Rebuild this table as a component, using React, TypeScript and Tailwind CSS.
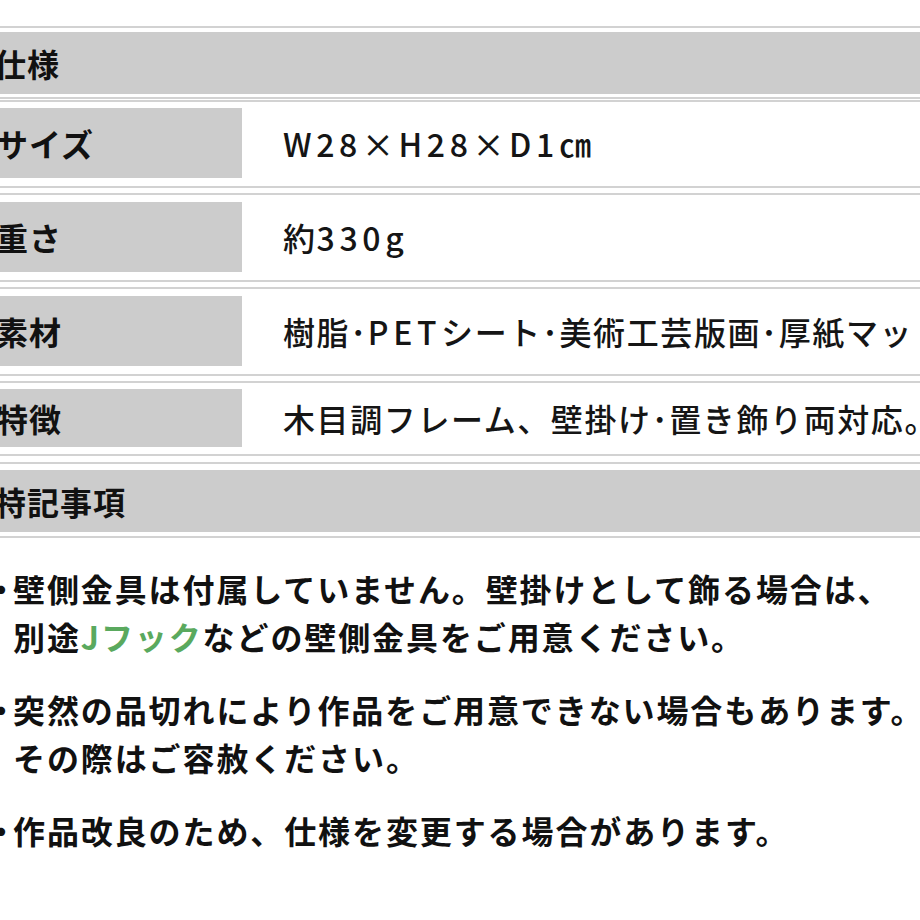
import React from "react";

const font = { fontFamily: '"Noto Sans CJK JP", "Noto Sans", sans-serif' };

function Header({ title, cls }: { title: string; cls: string }) {
  return (
    <div className={`border-y-2 border-[#d2d2d2] ${cls}`}>
      <div className="h-[62px] bg-[#cccccc] flex items-center">
        <span className="-ml-[6px] text-[32px] font-bold text-[#111] leading-none tracking-[1px]">{title}</span>
      </div>
    </div>
  );
}

function Row({ label, value, cls, h }: { label: string; value: React.ReactNode; cls: string; h: string }) {
  return (
    <div className={`border-y-2 border-[#d2d2d2] ${cls}`}>
      <div className={`flex ${h}`}>
        <div className="w-[242px] shrink-0 bg-[#cccccc] flex items-center">
          <span className="-ml-[4px] text-[32px] font-bold text-[#111] leading-none tracking-[1px]">{label}</span>
        </div>
        <div className="flex-1 flex items-center pl-[41px] overflow-hidden">
          <span className="text-[32px] font-medium text-[#151515] leading-none tracking-[1.6px] whitespace-nowrap">{value}</span>
        </div>
      </div>
    </div>
  );
}

function L({ children }: { children: React.ReactNode }) {
  return <span className="tracking-[4.6px]">{children}</span>;
}

function Note({ children, cls }: { children: React.ReactNode; cls: string }) {
  return (
    <div className={`flex -ml-[15px] ${cls}`}>
      <span className="w-[28px] shrink-0 text-[32px] font-bold leading-[48px] text-[#111]">・</span>
      <div className="text-[32px] font-bold leading-[48px] text-[#111] tracking-[1.9px]">{children}</div>
    </div>
  );
}

export default function App() {
  return (
    <div className="w-[920px] h-[920px] overflow-hidden bg-white" style={font}>
      <div className="pt-[26px] flex flex-col">
        <Header title="仕様" cls="pt-[4px] pb-[3px]" />
        <Row
          label="サイズ"
          value={<L>W28×H28×D1㎝</L>}
          cls="mt-[1px] pt-[6px] pb-[8px]"
          h="h-[70px]"
        />
        <Row
          label="重さ"
          value={
            <>
              約<L>330g</L>
            </>
          }
          cls="mt-[5px] pt-[7px] pb-[8px]"
          h="h-[70px]"
        />
        <Row
          label="素材"
          value={
            <>
              樹脂･<L>PET</L>シート･美術工芸版画･厚紙マット
            </>
          }
          cls="mt-[5px] pt-[7px] pb-[8px]"
          h="h-[70px]"
        />
        <Row
          label="特徴"
          value="木目調フレーム、壁掛け･置き飾り両対応。"
          cls="mt-[5px] pt-[6px] pb-[7px]"
          h="h-[58px]"
        />
        <Header title="特記事項" cls="mt-[6px] pt-[6px] pb-[4px]" />
        <div className="mt-[26px] flex flex-col">
          <Note cls="">
            <div className="whitespace-nowrap">壁側金具は付属していません。壁掛けとして飾る場合は、</div>
            <div className="whitespace-nowrap">
              別途<span className="text-[#5aa95e]">Jフック</span>などの壁側金具をご用意ください。
            </div>
          </Note>
          <Note cls="mt-[25px]">
            <div className="whitespace-nowrap">突然の品切れにより作品をご用意できない場合もあります。</div>
            <div className="whitespace-nowrap">その際はご容赦ください。</div>
          </Note>
          <Note cls="mt-[25px]">
            <div className="whitespace-nowrap">作品改良のため、仕様を変更する場合があります。</div>
          </Note>
        </div>
      </div>
    </div>
  );
}
